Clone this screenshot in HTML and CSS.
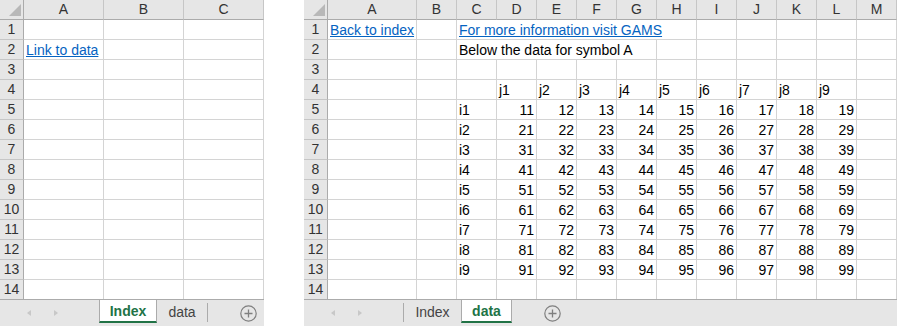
FILE: index.html
```html
<!DOCTYPE html>
<html>
  <head>
    <title>Workbook sheets</title>
    <link rel="stylesheet" href="styles.css">
  </head>
  <body>
    <div class="screens">

      <!-- Index sheet -->
      <div class="book book-index">
        <div class="sheet sheet-index">
          <div class="corner"></div><div class="col">A</div><div class="col">B</div><div class="col">C</div>
          <div class="rn">1</div><div></div><div></div><div></div>
          <div class="rn">2</div><div><a class="link" href="#data">Link to data</a></div><div></div><div></div>
          <div class="rn">3</div><div></div><div></div><div></div>
          <div class="rn">4</div><div></div><div></div><div></div>
          <div class="rn">5</div><div></div><div></div><div></div>
          <div class="rn">6</div><div></div><div></div><div></div>
          <div class="rn">7</div><div></div><div></div><div></div>
          <div class="rn">8</div><div></div><div></div><div></div>
          <div class="rn">9</div><div></div><div></div><div></div>
          <div class="rn">10</div><div></div><div></div><div></div>
          <div class="rn">11</div><div></div><div></div><div></div>
          <div class="rn">12</div><div></div><div></div><div></div>
          <div class="rn">13</div><div></div><div></div><div></div>
          <div class="rn">14</div><div></div><div></div><div></div>
        </div>
        <div class="tabs">
          <div class="nav"><span class="arrow arrow-left"></span><span class="arrow arrow-right"></span></div>
          <div class="tab-list">
            <div class="tab tab-active tab-index">Index</div>
            <div class="tab tab-data-idle">data</div>
            <div class="sep"></div>
          </div>
          <svg class="add" width="17" height="17" viewBox="0 0 17 17">
            <circle cx="8.5" cy="8.5" r="7.7" fill="none" stroke="#7f7f7f" stroke-width="1.2"/>
            <path d="M8.5 4.5v8M4.5 8.5h8" stroke="#7f7f7f" stroke-width="1.3"/>
          </svg>
        </div>
      </div>

      <!-- data sheet -->
      <div class="book book-data">
        <div class="sheet sheet-data">
          <div class="corner"></div><div class="col">A</div><div class="col">B</div><div class="col">C</div><div class="col">D</div><div class="col">E</div><div class="col">F</div><div class="col">G</div><div class="col">H</div><div class="col">I</div><div class="col">J</div><div class="col">K</div><div class="col">L</div><div class="col">M</div>

          <div class="rn">1</div><div><a class="link" href="#index">Back to index</a></div><div></div><div class="span6"><a class="link" href="#gams">For more information visit GAMS</a></div><div></div><div></div><div></div><div></div><div></div>

          <div class="rn">2</div><div></div><div></div><div class="span5">Below the data for symbol A</div><div></div><div></div><div></div><div></div><div></div><div></div>

          <div class="rn">3</div><div></div><div></div><div></div><div></div><div></div><div></div><div></div><div></div><div></div><div></div><div></div><div></div><div></div>

          <div class="rn">4</div><div></div><div></div><div></div><div>j1</div><div>j2</div><div>j3</div><div>j4</div><div>j5</div><div>j6</div><div>j7</div><div>j8</div><div>j9</div><div></div>

          <div class="rn">5</div><div></div><div></div><div>i1</div><div class="num">11</div><div class="num">12</div><div class="num">13</div><div class="num">14</div><div class="num">15</div><div class="num">16</div><div class="num">17</div><div class="num">18</div><div class="num">19</div><div></div>
          <div class="rn">6</div><div></div><div></div><div>i2</div><div class="num">21</div><div class="num">22</div><div class="num">23</div><div class="num">24</div><div class="num">25</div><div class="num">26</div><div class="num">27</div><div class="num">28</div><div class="num">29</div><div></div>
          <div class="rn">7</div><div></div><div></div><div>i3</div><div class="num">31</div><div class="num">32</div><div class="num">33</div><div class="num">34</div><div class="num">35</div><div class="num">36</div><div class="num">37</div><div class="num">38</div><div class="num">39</div><div></div>
          <div class="rn">8</div><div></div><div></div><div>i4</div><div class="num">41</div><div class="num">42</div><div class="num">43</div><div class="num">44</div><div class="num">45</div><div class="num">46</div><div class="num">47</div><div class="num">48</div><div class="num">49</div><div></div>
          <div class="rn">9</div><div></div><div></div><div>i5</div><div class="num">51</div><div class="num">52</div><div class="num">53</div><div class="num">54</div><div class="num">55</div><div class="num">56</div><div class="num">57</div><div class="num">58</div><div class="num">59</div><div></div>
          <div class="rn">10</div><div></div><div></div><div>i6</div><div class="num">61</div><div class="num">62</div><div class="num">63</div><div class="num">64</div><div class="num">65</div><div class="num">66</div><div class="num">67</div><div class="num">68</div><div class="num">69</div><div></div>
          <div class="rn">11</div><div></div><div></div><div>i7</div><div class="num">71</div><div class="num">72</div><div class="num">73</div><div class="num">74</div><div class="num">75</div><div class="num">76</div><div class="num">77</div><div class="num">78</div><div class="num">79</div><div></div>
          <div class="rn">12</div><div></div><div></div><div>i8</div><div class="num">81</div><div class="num">82</div><div class="num">83</div><div class="num">84</div><div class="num">85</div><div class="num">86</div><div class="num">87</div><div class="num">88</div><div class="num">89</div><div></div>
          <div class="rn">13</div><div></div><div></div><div>i9</div><div class="num">91</div><div class="num">92</div><div class="num">93</div><div class="num">94</div><div class="num">95</div><div class="num">96</div><div class="num">97</div><div class="num">98</div><div class="num">99</div><div></div>

          <div class="rn">14</div><div></div><div></div><div></div><div></div><div></div><div></div><div></div><div></div><div></div><div></div><div></div><div></div><div></div><div></div>
        </div>
        <div class="tabs">
          <div class="nav"><span class="arrow arrow-left"></span><span class="arrow arrow-right"></span></div>
          <div class="tab-list">
            <div class="sep"></div>
            <div class="tab tab-index-idle">Index</div>
            <div class="tab tab-active tab-data">data</div>
          </div>
          <svg class="add" width="17" height="17" viewBox="0 0 17 17">
            <circle cx="8.5" cy="8.5" r="7.7" fill="none" stroke="#7f7f7f" stroke-width="1.2"/>
            <path d="M8.5 4.5v8M4.5 8.5h8" stroke="#7f7f7f" stroke-width="1.3"/>
          </svg>
        </div>
      </div>

    </div>
  </body>
</html>
```

FILE: styles.css
```css
* {
    box-sizing: border-box;
}

body {
    margin: 0;
    background: #fff;
    color: #000;
    font: 14px "Liberation Sans", Arial, sans-serif;
}

.screens {
    display: flex;
    gap: 40px;
}

.book {
    display: flex;
    flex-direction: column;
    height: 326px;
}

.book-index {
    width: 264px;
}

.book-data {
    width: 593px;
}

/* grid of cells */

.sheet {
    display: grid;
    grid-auto-rows: 20px;
    height: 299px;
    overflow: hidden;
}

.sheet-index {
    grid-template-columns: 24px repeat(3, 80px);
}

.sheet-data {
    grid-template-columns: 24px 89px repeat(12, 40px);
}

.sheet > div {
    display: flex;
    align-items: flex-end;
    padding: 0 2px;
    line-height: 17px;
    white-space: nowrap;
    overflow: hidden;
    border-right: 1px solid #d4d4d4;
    border-bottom: 1px solid #d4d4d4;
}

.sheet > .col,
.sheet > .rn,
.sheet > .corner {
    background: #e6e6e6;
    color: #333;
    justify-content: center;
    align-items: center;
}

.sheet > .col {
    border-right-color: #c6c6c6;
    border-bottom-color: #ababab;
}

.sheet > .rn {
    border-right-color: #ababab;
    border-bottom-color: #c6c6c6;
}

.sheet > .corner {
    justify-content: flex-end;
    align-items: flex-end;
    padding: 0 2px 3px 0;
    border-right-color: #ababab;
    border-bottom-color: #ababab;
}

.corner::after {
    content: "";
    width: 12px;
    height: 12px;
    background: #b8b8b8;
    clip-path: polygon(100% 0, 100% 100%, 0 100%);
}

.sheet > .num {
    justify-content: flex-end;
}

.sheet > .span5 {
    grid-column: span 5;
}

.sheet > .span6 {
    grid-column: span 6;
}

.link {
    color: #0563c1;
    text-decoration: underline;
}

/* sheet tabs */

.tabs {
    display: flex;
    align-items: flex-start;
    height: 27px;
    background: #e6e6e6;
    border-top: 1px solid #ababab;
}

.nav {
    display: flex;
    align-items: center;
    gap: 23px;
    width: 99px;
    height: 25px;
    padding-left: 27px;
}

.arrow {
    width: 0;
    height: 0;
    border-top: 3.5px solid transparent;
    border-bottom: 3.5px solid transparent;
}

.arrow-left {
    border-right: 4px solid #c8c8c8;
}

.arrow-right {
    border-left: 4px solid #c8c8c8;
}

.tab-list {
    display: flex;
    width: 109px;
}

.tab {
    display: flex;
    align-items: center;
    justify-content: center;
    height: 23px;
    padding-top: 1px;
    color: #444;
}

.tab-active {
    background: #fff;
    color: #217346;
    font-weight: bold;
    border-left: 1px solid #ababab;
    border-right: 1px solid #ababab;
    border-bottom: 2px solid #217346;
}

.tab-index {
    width: 58px;
}

.tab-data-idle {
    width: 50px;
}

.tab-index-idle {
    width: 57px;
}

.tab-data {
    width: 51px;
}

.sep {
    width: 1px;
    height: 19px;
    margin-top: 3px;
    background: #ababab;
}

.add {
    margin: 5px 0 0 32px;
}
```
